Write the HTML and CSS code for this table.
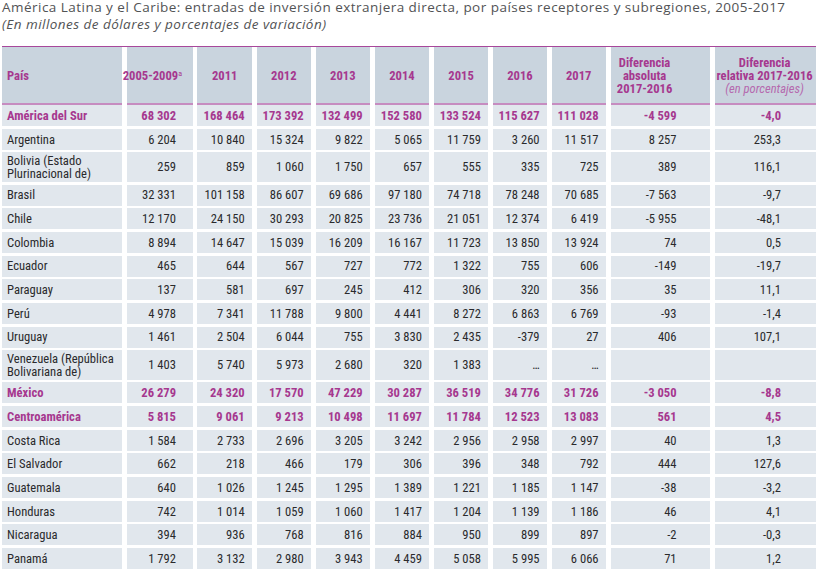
FILE: index.html
```html
<!DOCTYPE html>
<html lang="es">
<head>
<meta charset="utf-8">
<title>Inversión extranjera directa</title>
<link rel="stylesheet" href="styles.css">
</head>
<body>
<div class="page">
  <h1 class="title">América Latina y el Caribe: entradas de inversión extranjera directa, por países receptores y subregiones, 2005-2017</h1>
  <p class="subtitle">(En millones de dólares y porcentajes de variación)</p>
  <div class="table">
    <div class="row head">
      <div class="cell name">País</div>
      <div class="cell"><span>2005-2009<sup>a</sup></span></div>
      <div class="cell">2011</div>
      <div class="cell">2012</div>
      <div class="cell">2013</div>
      <div class="cell">2014</div>
      <div class="cell">2015</div>
      <div class="cell">2016</div>
      <div class="cell">2017</div>
      <div class="cell">Diferencia<br>absoluta<br>2017-2016</div>
      <div class="cell"><span>Diferencia<br>relativa 2017-2016<br><span class="unit">(en porcentajes)</span></span></div>
    </div>
    <div class="body">
      <div class="row region"><div class="cell name">América del Sur</div><div class="cell">68 302</div><div class="cell">168 464</div><div class="cell">173 392</div><div class="cell">132 499</div><div class="cell">152 580</div><div class="cell">133 524</div><div class="cell">115 627</div><div class="cell">111 028</div><div class="cell">-4 599</div><div class="cell">-4,0</div></div>
      <div class="row"><div class="cell name">Argentina</div><div class="cell">6 204</div><div class="cell">10 840</div><div class="cell">15 324</div><div class="cell">9 822</div><div class="cell">5 065</div><div class="cell">11 759</div><div class="cell">3 260</div><div class="cell">11 517</div><div class="cell">8 257</div><div class="cell">253,3</div></div>
      <div class="row"><div class="cell name">Bolivia (Estado<br>Plurinacional de)</div><div class="cell">259</div><div class="cell">859</div><div class="cell">1 060</div><div class="cell">1 750</div><div class="cell">657</div><div class="cell">555</div><div class="cell">335</div><div class="cell">725</div><div class="cell">389</div><div class="cell">116,1</div></div>
      <div class="row"><div class="cell name">Brasil</div><div class="cell">32 331</div><div class="cell">101 158</div><div class="cell">86 607</div><div class="cell">69 686</div><div class="cell">97 180</div><div class="cell">74 718</div><div class="cell">78 248</div><div class="cell">70 685</div><div class="cell">-7 563</div><div class="cell">-9,7</div></div>
      <div class="row"><div class="cell name">Chile</div><div class="cell">12 170</div><div class="cell">24 150</div><div class="cell">30 293</div><div class="cell">20 825</div><div class="cell">23 736</div><div class="cell">21 051</div><div class="cell">12 374</div><div class="cell">6 419</div><div class="cell">-5 955</div><div class="cell">-48,1</div></div>
      <div class="row"><div class="cell name">Colombia</div><div class="cell">8 894</div><div class="cell">14 647</div><div class="cell">15 039</div><div class="cell">16 209</div><div class="cell">16 167</div><div class="cell">11 723</div><div class="cell">13 850</div><div class="cell">13 924</div><div class="cell">74</div><div class="cell">0,5</div></div>
      <div class="row"><div class="cell name">Ecuador</div><div class="cell">465</div><div class="cell">644</div><div class="cell">567</div><div class="cell">727</div><div class="cell">772</div><div class="cell">1 322</div><div class="cell">755</div><div class="cell">606</div><div class="cell">-149</div><div class="cell">-19,7</div></div>
      <div class="row"><div class="cell name">Paraguay</div><div class="cell">137</div><div class="cell">581</div><div class="cell">697</div><div class="cell">245</div><div class="cell">412</div><div class="cell">306</div><div class="cell">320</div><div class="cell">356</div><div class="cell">35</div><div class="cell">11,1</div></div>
      <div class="row"><div class="cell name">Perú</div><div class="cell">4 978</div><div class="cell">7 341</div><div class="cell">11 788</div><div class="cell">9 800</div><div class="cell">4 441</div><div class="cell">8 272</div><div class="cell">6 863</div><div class="cell">6 769</div><div class="cell">-93</div><div class="cell">-1,4</div></div>
      <div class="row"><div class="cell name">Uruguay</div><div class="cell">1 461</div><div class="cell">2 504</div><div class="cell">6 044</div><div class="cell">755</div><div class="cell">3 830</div><div class="cell">2 435</div><div class="cell">-379</div><div class="cell">27</div><div class="cell">406</div><div class="cell">107,1</div></div>
      <div class="row"><div class="cell name">Venezuela (República<br>Bolivariana de)</div><div class="cell">1 403</div><div class="cell">5 740</div><div class="cell">5 973</div><div class="cell">2 680</div><div class="cell">320</div><div class="cell">1 383</div><div class="cell">…</div><div class="cell">…</div><div class="cell"></div><div class="cell"></div></div>
      <div class="row region"><div class="cell name">México</div><div class="cell">26 279</div><div class="cell">24 320</div><div class="cell">17 570</div><div class="cell">47 229</div><div class="cell">30 287</div><div class="cell">36 519</div><div class="cell">34 776</div><div class="cell">31 726</div><div class="cell">-3 050</div><div class="cell">-8,8</div></div>
      <div class="row region"><div class="cell name">Centroamérica</div><div class="cell">5 815</div><div class="cell">9 061</div><div class="cell">9 213</div><div class="cell">10 498</div><div class="cell">11 697</div><div class="cell">11 784</div><div class="cell">12 523</div><div class="cell">13 083</div><div class="cell">561</div><div class="cell">4,5</div></div>
      <div class="row"><div class="cell name">Costa Rica</div><div class="cell">1 584</div><div class="cell">2 733</div><div class="cell">2 696</div><div class="cell">3 205</div><div class="cell">3 242</div><div class="cell">2 956</div><div class="cell">2 958</div><div class="cell">2 997</div><div class="cell">40</div><div class="cell">1,3</div></div>
      <div class="row"><div class="cell name">El Salvador</div><div class="cell">662</div><div class="cell">218</div><div class="cell">466</div><div class="cell">179</div><div class="cell">306</div><div class="cell">396</div><div class="cell">348</div><div class="cell">792</div><div class="cell">444</div><div class="cell">127,6</div></div>
      <div class="row"><div class="cell name">Guatemala</div><div class="cell">640</div><div class="cell">1 026</div><div class="cell">1 245</div><div class="cell">1 295</div><div class="cell">1 389</div><div class="cell">1 221</div><div class="cell">1 185</div><div class="cell">1 147</div><div class="cell">-38</div><div class="cell">-3,2</div></div>
      <div class="row"><div class="cell name">Honduras</div><div class="cell">742</div><div class="cell">1 014</div><div class="cell">1 059</div><div class="cell">1 060</div><div class="cell">1 417</div><div class="cell">1 204</div><div class="cell">1 139</div><div class="cell">1 186</div><div class="cell">46</div><div class="cell">4,1</div></div>
      <div class="row"><div class="cell name">Nicaragua</div><div class="cell">394</div><div class="cell">936</div><div class="cell">768</div><div class="cell">816</div><div class="cell">884</div><div class="cell">950</div><div class="cell">899</div><div class="cell">897</div><div class="cell">-2</div><div class="cell">-0,3</div></div>
      <div class="row"><div class="cell name">Panamá</div><div class="cell">1 792</div><div class="cell">3 132</div><div class="cell">2 980</div><div class="cell">3 943</div><div class="cell">4 459</div><div class="cell">5 058</div><div class="cell">5 995</div><div class="cell">6 066</div><div class="cell">71</div><div class="cell">1,2</div></div>
      <div class="row region"><div class="cell name"></div><div class="cell"></div><div class="cell"></div><div class="cell"></div><div class="cell"></div><div class="cell"></div><div class="cell"></div><div class="cell"></div><div class="cell"></div><div class="cell"></div><div class="cell"></div></div>
    </div>
  </div>
</div>
</body>
</html>
```

FILE: styles.css
```css
* {
  box-sizing: border-box;
}

body {
  margin: 0;
  background: #ffffff;
}

.page {
  padding-left: 2px;
}

.title {
  margin: 0;
  font-family: "Open Sans", Lato, sans-serif;
  font-size: 13.5px;
  font-weight: 400;
  line-height: 14px;
  letter-spacing: 0.47px;
  color: #525355;
  white-space: nowrap;
}

.subtitle {
  margin: 0;
  font-family: "Open Sans", Lato, sans-serif;
  font-size: 13.5px;
  font-style: italic;
  line-height: 21px;
  letter-spacing: 0.46px;
  color: #525355;
}

.table {
  margin-top: 11px;
  border-top: 1px solid #a8479b;
  font-family: "Roboto Condensed", "Liberation Sans Narrow", Roboto, sans-serif;
  font-size: 12.6px;
  line-height: 13.3px;
}

.row {
  display: grid;
  grid-template-columns: 120px 66px 54.6px 54.3px 54.3px 54.6px 54.3px 54px 54.3px 99.3px 1fr;
  column-gap: 4.7px;
}

.body {
  display: flex;
  flex-direction: column;
  gap: 2.67px;
}

.cell {
  display: flex;
  align-items: center;
  justify-content: flex-end;
  text-align: right;
  white-space: nowrap;
  min-height: 21px;
  padding: 1.5px 7.3px 1.5px 5px;
  background: #e1e7ed;
  color: #2a2a2c;
}

.row > .cell:nth-child(2) {
  padding-right: 16.7px;
}

.row > .cell:nth-child(10) {
  padding-right: 33.3px;
}

.row > .cell:nth-child(11) {
  padding-right: 35px;
}

.cell.name {
  justify-content: flex-start;
  text-align: left;
}

.region .cell {
  font-weight: 700;
  color: #a6388f;
}

.head .cell {
  height: 58px;
  padding: 0 2px;
  justify-content: center;
  text-align: center;
  line-height: 13px;
  background: #c9d4de;
  border-bottom: 2.5px solid #c68cc0;
  font-weight: 700;
  color: #a6388f;
}

.head .cell.name {
  justify-content: flex-start;
  text-align: left;
  padding-left: 5px;
}

.head sup {
  font-size: 8px;
  font-weight: 400;
  line-height: 0;
  vertical-align: 4px;
}

.unit {
  font-weight: 400;
  font-style: italic;
  color: #b56aae;
}
```
